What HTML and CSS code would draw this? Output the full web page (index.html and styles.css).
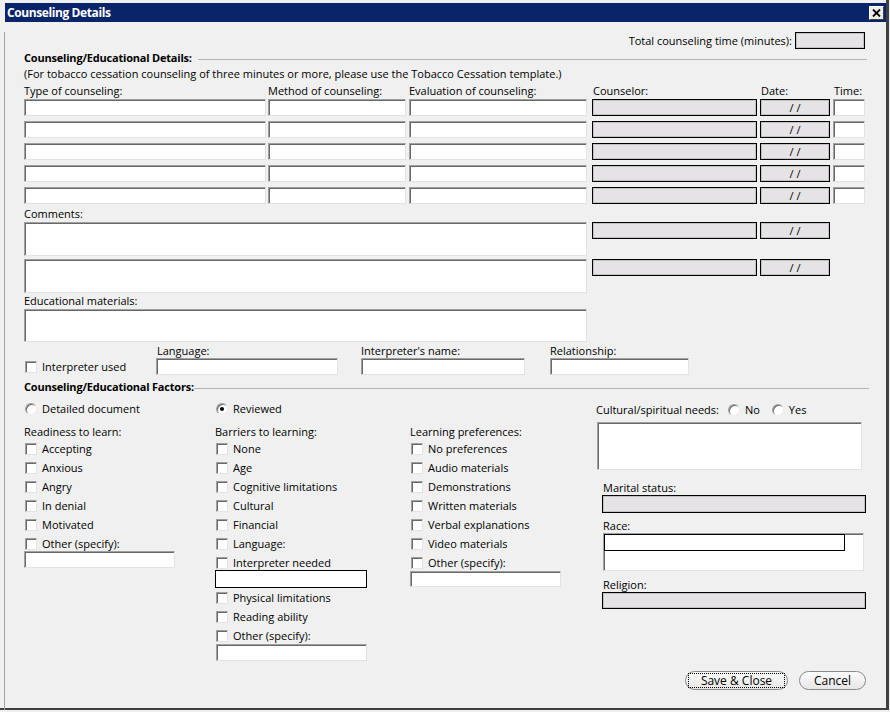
FILE: index.html
```html
<!DOCTYPE html>
<html>
<head>
<meta charset="utf-8">
<title>Counseling Details</title>
<link rel="stylesheet" href="styles.css">
</head>
<body>
<div class="frame">
  <div class="titlebar">
    <span class="title">Counseling Details</span>
    <span class="close-btn"><svg width="9" height="8" viewBox="0 0 9 8"><path d="M1 0.5 L8 7.5 M8 0.5 L1 7.5" stroke="#000" stroke-width="1.8"/></svg></span>
  </div>
  <div class="client">
    <div class="content">
      <div class="total-row"><span>Total counseling time (minutes):</span><div class="gbox w-total"></div></div>
      <div class="sec-head">Counseling/Educational Details:</div>
      <div class="note">(For tobacco cessation counseling of three minutes or more, please use the Tobacco Cessation template.)</div>
      <div class="row label-row">
        <span class="c-type">Type of counseling:</span>
        <span class="c-method">Method of counseling:</span>
        <span class="c-eval">Evaluation of counseling:</span>
        <span class="c-couns lbl-in">Counselor:</span>
        <span class="c-date">Date:</span>
        <span class="c-time">Time:</span>
      </div>
      <div class="rows">
        <div class="row"><div class="field c-type"></div><div class="field c-method"></div><div class="field c-eval"></div><div class="gbox c-couns"></div><div class="gbox c-date">/ /</div><div class="field c-time"></div></div>
        <div class="row"><div class="field c-type"></div><div class="field c-method"></div><div class="field c-eval"></div><div class="gbox c-couns"></div><div class="gbox c-date">/ /</div><div class="field c-time"></div></div>
        <div class="row"><div class="field c-type"></div><div class="field c-method"></div><div class="field c-eval"></div><div class="gbox c-couns"></div><div class="gbox c-date">/ /</div><div class="field c-time"></div></div>
        <div class="row"><div class="field c-type"></div><div class="field c-method"></div><div class="field c-eval"></div><div class="gbox c-couns"></div><div class="gbox c-date">/ /</div><div class="field c-time"></div></div>
        <div class="row"><div class="field c-type"></div><div class="field c-method"></div><div class="field c-eval"></div><div class="gbox c-couns"></div><div class="gbox c-date">/ /</div><div class="field c-time"></div></div>
      </div>
      <div class="lbl comments-lbl">Comments:</div>
      <div class="row comment-row"><div class="field c-wide tall"></div><div class="gbox c-couns"></div><div class="gbox c-date">/ /</div></div>
      <div class="row comment-row second"><div class="field c-wide tall"></div><div class="gbox c-couns"></div><div class="gbox c-date">/ /</div></div>
      <div class="lbl edu-lbl">Educational materials:</div>
      <div class="field c-wide edu-box"></div>
      <div class="interp-row">
        <div class="ir-check"><span class="chk"></span><span>Interpreter used</span></div>
        <div class="ir-lang"><div class="lbl lbl-in">Language:</div><div class="field ir-input"></div></div>
        <div class="ir-name"><div class="lbl">Interpreter's name:</div><div class="field ir-input"></div></div>
        <div class="ir-rel"><div class="lbl">Relationship:</div><div class="field ir-input"></div></div>
      </div>
      <div class="sec-head tight">Counseling/Educational Factors:</div>
      <div class="factors">
        <div class="fc fc1">
          <div class="opt-row"><span class="radio"></span><span>Detailed document</span></div>
          <div class="grp-label">Readiness to learn:</div>
          <div class="chk-row"><span class="chk"></span><span>Accepting</span></div>
          <div class="chk-row"><span class="chk"></span><span>Anxious</span></div>
          <div class="chk-row"><span class="chk"></span><span>Angry</span></div>
          <div class="chk-row"><span class="chk"></span><span>In denial</span></div>
          <div class="chk-row"><span class="chk"></span><span>Motivated</span></div>
          <div class="chk-row"><span class="chk"></span><span>Other (specify):</span></div>
          <div class="field spec-input sp1"></div>
        </div>
        <div class="fc fc2">
          <div class="opt-row"><span class="radio checked"></span><span>Reviewed</span></div>
          <div class="grp-label">Barriers to learning:</div>
          <div class="chk-row"><span class="chk"></span><span>None</span></div>
          <div class="chk-row"><span class="chk"></span><span>Age</span></div>
          <div class="chk-row"><span class="chk"></span><span>Cognitive limitations</span></div>
          <div class="chk-row"><span class="chk"></span><span>Cultural</span></div>
          <div class="chk-row"><span class="chk"></span><span>Financial</span></div>
          <div class="chk-row"><span class="chk"></span><span>Language:</span></div>
          <div class="chk-row"><span class="chk"></span><span>Interpreter needed</span></div>
          <div class="black-input"></div>
          <div class="chk-row"><span class="chk"></span><span>Physical limitations</span></div>
          <div class="chk-row"><span class="chk"></span><span>Reading ability</span></div>
          <div class="chk-row"><span class="chk"></span><span>Other (specify):</span></div>
          <div class="field spec-input sp2"></div>
        </div>
        <div class="fc fc3">
          <div class="opt-row"></div>
          <div class="grp-label">Learning preferences:</div>
          <div class="chk-row"><span class="chk"></span><span>No preferences</span></div>
          <div class="chk-row"><span class="chk"></span><span>Audio materials</span></div>
          <div class="chk-row"><span class="chk"></span><span>Demonstrations</span></div>
          <div class="chk-row"><span class="chk"></span><span>Written materials</span></div>
          <div class="chk-row"><span class="chk"></span><span>Verbal explanations</span></div>
          <div class="chk-row"><span class="chk"></span><span>Video materials</span></div>
          <div class="chk-row"><span class="chk"></span><span>Other (specify):</span></div>
          <div class="field spec-input sp3"></div>
        </div>
        <div class="fc fc4">
          <div class="cult-row">
            <span>Cultural/spiritual needs:</span>
            <span class="radio r-no"></span><span class="r-text">No</span>
            <span class="radio r-yes"></span><span class="r-text">Yes</span>
          </div>
          <div class="field cult-box"></div>
          <div class="lbl side-lbl ms-lbl">Marital status:</div>
          <div class="gbox side-box"></div>
          <div class="lbl side-lbl race-lbl">Race:</div>
          <div class="field race-box"><div class="race-item"></div></div>
          <div class="lbl side-lbl rel-lbl">Religion:</div>
          <div class="gbox side-box rel-box"></div>
        </div>
      </div>
      <div class="btn-row">
        <div class="btn btn-save"><span class="focus">Save &amp; Close</span></div>
        <div class="btn btn-cancel">Cancel</div>
      </div>
    </div>
  </div>
</div>
</body>
</html>
```
FILE: styles.css
```css
html, body {
  margin: 0;
  padding: 0;
  background: #f0f0f0;
}
body {
  font-family: "Open Sans", "Noto Sans", sans-serif;
  font-size: 11px;
  line-height: 14px;
  color: #000;
}
.frame {
  width: 889px;
  height: 710px;
  box-sizing: border-box;
  border-right: 3px solid #404040;
  border-bottom: 2px solid #404040;
  padding-top: 3px;
  background: #f0f0f0;
}
.titlebar {
  margin-left: 5px;
  height: 19px;
  background: #0a246a;
  display: flex;
  align-items: center;
  justify-content: space-between;
}
.title {
  color: #fff;
  font-weight: bold;
  font-size: 12px;
  letter-spacing: -0.4px;
  padding-left: 2px;
}
.close-btn {
  width: 15px;
  height: 14px;
  box-sizing: border-box;
  margin-right: 2px;
  background: #ecebe6;
  border: 1px solid;
  border-color: #fff #404040 #404040 #fff;
  display: flex;
  align-items: center;
  justify-content: center;
}
.client {
  margin-left: 4px;
  border-left: 1px solid #a0a0a0;
  height: 686px;
}
.content {
  padding-left: 19px;
  width: 843px;
}
.total-row {
  display: flex;
  justify-content: flex-end;
  align-items: center;
  margin-top: 10px;
  height: 17px;
  margin-right: 2px;
}
.w-total {
  width: 70px;
  height: 17px;
  margin-left: 3px;
}
.sec-head {
  margin-top: 2px;
  height: 14px;
  display: flex;
  align-items: center;
  font-weight: bold;
  letter-spacing: -0.2px;
  white-space: nowrap;
}
.sec-head::after {
  content: "";
  flex: 1;
  height: 1px;
  background: #b4b4b4;
  margin-left: 6px;
  margin-top: 2px;
}
.sec-head.tight {
  margin-top: 5px;
  margin-right: -2px;
}
.sec-head.tight::after {
  margin-left: 0;
}
.note {
  margin-top: 2px;
  height: 14px;
  white-space: nowrap;
}
.row {
  display: flex;
  align-items: flex-start;
}
.label-row {
  margin-top: 3px;
  height: 14px;
  white-space: nowrap;
}
.rows {
  margin-top: 1px;
  display: flex;
  flex-direction: column;
  gap: 5px;
}
.rows .row > div {
  height: 17px;
}
.c-type { width: 242px; flex-shrink: 0; }
.c-method { width: 138px; margin-left: 2px; flex-shrink: 0; }
.c-eval { width: 178px; margin-left: 3px; flex-shrink: 0; }
.c-couns { width: 165px; margin-left: 5px; flex-shrink: 0; height: 17px; }
.c-date { width: 70px; margin-left: 3px; flex-shrink: 0; height: 17px; }
.c-time { width: 32px; margin-left: 3px; flex-shrink: 0; }
.c-wide { width: 563px; flex-shrink: 0; }
.lbl-in { padding-left: 1px; }

.field {
  box-sizing: border-box;
  background: #fff;
  border: 1px solid;
  border-color: #a0a0a0 #e3e3e3 #e3e3e3 #a0a0a0;
  box-shadow: inset 1px 1px 0 #696969;
}
.gbox {
  box-sizing: border-box;
  background: #e6e3e6;
  border: 1px solid #000;
  box-shadow: inset 0 0 0 1px rgba(0, 0, 0, 0.15);
  text-align: center;
  line-height: 15px;
}
.lbl {
  height: 14px;
  white-space: nowrap;
}
.comments-lbl { margin-top: 3px; }
.comment-row { margin-top: 1px; }
.comment-row.second { margin-top: 3px; }
.tall { height: 34px; }
.edu-lbl { margin-top: 1px; }
.edu-box { margin-top: 1px; height: 33px; }

.interp-row {
  display: flex;
  align-items: flex-end;
  margin-top: 2px;
}
.ir-check {
  width: 132px;
  height: 17px;
  display: flex;
  align-items: center;
  flex-shrink: 0;
}
.ir-lang { width: 182px; flex-shrink: 0; }
.ir-name { width: 164px; margin-left: 23px; flex-shrink: 0; }
.ir-rel { width: 139px; margin-left: 25px; flex-shrink: 0; }
.ir-input { height: 17px; }

.chk {
  display: inline-block;
  box-sizing: border-box;
  width: 12px;
  height: 12px;
  margin-left: 1px;
  margin-right: 5px;
  background: #fff;
  border: 1px solid;
  border-color: #a0a0a0 #e3e3e3 #e3e3e3 #a0a0a0;
  box-shadow: inset 1px 1px 0 #696969;
  flex-shrink: 0;
}
.radio {
  display: inline-block;
  box-sizing: border-box;
  width: 12px;
  height: 12px;
  margin-left: 1px;
  margin-right: 5px;
  border-radius: 50%;
  background: #fff;
  border: 1px solid;
  border-color: #a0a0a0 #ececec #ececec #a0a0a0;
  box-shadow: inset 1px 1px 0 #696969;
  position: relative;
  flex-shrink: 0;
}
.radio.checked::after {
  content: "";
  position: absolute;
  left: 3px;
  top: 3px;
  width: 4px;
  height: 4px;
  border-radius: 50%;
  background: #000;
}

.factors {
  display: flex;
  align-items: flex-start;
  margin-top: 8px;
}
.fc { display: flex; flex-direction: column; flex-shrink: 0; }
.fc1 { width: 191px; }
.fc2 { width: 195px; }
.fc3 { width: 186px; }
.fc4 { flex: 1; }
.opt-row {
  height: 14px;
  display: flex;
  align-items: center;
  white-space: nowrap;
}
.grp-label {
  margin-top: 9px;
  height: 14px;
  white-space: nowrap;
}
.chk-row {
  height: 19px;
  display: flex;
  align-items: center;
  white-space: nowrap;
}
.spec-input {
  margin-top: -2px;
  height: 17px;
  width: 151px;
}
.sp2 { margin-top: -1px; margin-left: 1px; width: 151px; }
.sp3 { margin-top: -1px; height: 16px; }
.black-input {
  margin-top: -2px;
  width: 152px;
  height: 18px;
  box-sizing: border-box;
  background: #fff;
  border: 1px solid #000;
}

.cult-row {
  height: 14px;
  display: flex;
  align-items: center;
  white-space: nowrap;
  margin-top: 1px;
}
.r-no { margin-left: 9px; }
.r-yes { margin-left: 12px; }
.cult-box {
  margin-top: 5px;
  margin-left: 1px;
  width: 265px;
  height: 48px;
}
.side-lbl { padding-left: 7px; }
.ms-lbl { margin-top: 11px; }
.side-box {
  margin-left: 6px;
  width: 264px;
  height: 18px;
}
.race-lbl { margin-top: 6px; }
.race-box {
  margin-left: 7px;
  width: 261px;
  height: 38px;
}
.race-item {
  width: 241px;
  height: 17px;
  box-sizing: border-box;
  border: 1px solid #000;
  background: #fff;
}
.rel-lbl { margin-top: 7px; }
.rel-box { height: 17px; }

.btn-row {
  display: flex;
  justify-content: flex-end;
  margin-top: 10px;
  margin-right: 1px;
}
.btn {
  box-sizing: border-box;
  height: 19px;
  border: 1px solid #8a8a8a;
  border-radius: 10px;
  background: linear-gradient(#fdfdfd, #e6e6e6);
  font-size: 12px;
  display: flex;
  align-items: center;
  justify-content: center;
  line-height: 15px;
}
.btn-save { width: 103px; }
.btn-cancel { width: 67px; margin-left: 11px; }
.focus {
  box-sizing: border-box;
  width: 97px;
  height: 15px;
  border: 1px dotted #000;
  text-align: center;
  line-height: 13px;
}
```
